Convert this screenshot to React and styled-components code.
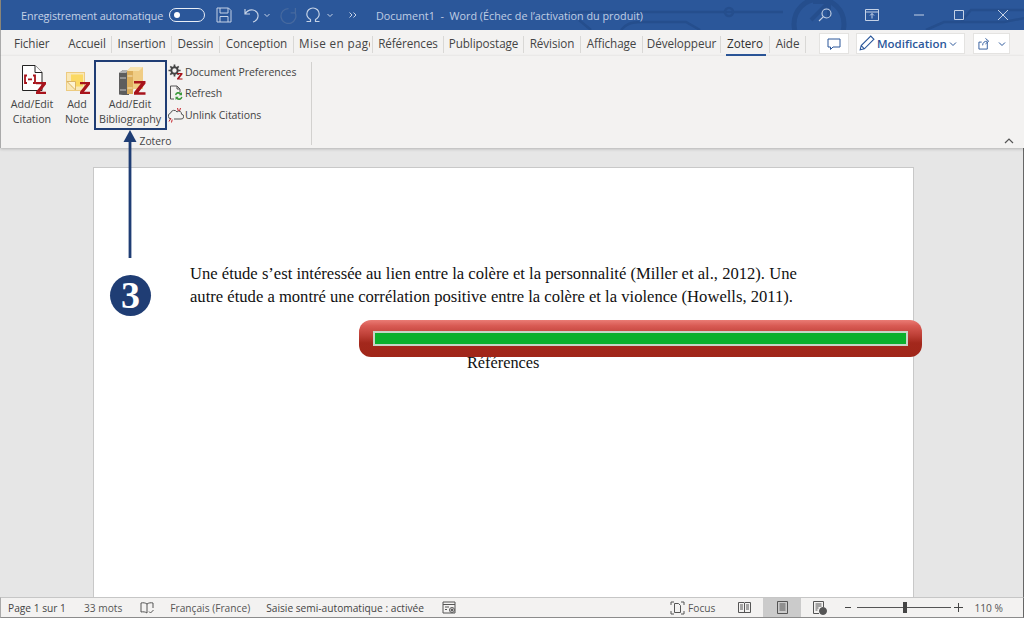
import React from "react";
import styled, { createGlobalStyle } from "styled-components";

const Global = createGlobalStyle`
  html, body { margin: 0; padding: 0; width: 1024px; height: 618px; overflow: hidden; }
  #root { width: 1024px; height: 618px; }
  * { box-sizing: border-box; }
`;

const UI = `"Open Sans", "Noto Sans", sans-serif`;

const Window = styled.div`
  position: relative;
  width: 1024px;
  height: 618px;
  display: flex;
  flex-direction: column;
  overflow: hidden;
  font-family: ${UI};
  background: #e6e6e6;
`;

/* Title bar */
const TitleBar = styled.header`
  position: relative;
  flex: 0 0 30px;
  height: 30px;
  background: #2b579a;
  display: flex;
  align-items: center;
  padding-left: 20px;
  color: #c5d2e6;
  font-size: 10.8px;
  border-left: 1px solid #8a8578;
`;
const Circuit = styled.svg`
  position: absolute;
  left: 0;
  top: 0;
  pointer-events: none;
`;
const AutoSave = styled.span`
  width: 148px;
  white-space: nowrap;
  letter-spacing: -0.12px;
  position: relative;
`;
const Toggle = styled.span`
  position: relative;
  width: 36px;
  height: 14px;
  border: 1.3px solid #e8edf5;
  border-radius: 8px;
  flex: none;
  &::after {
    content: "";
    position: absolute;
    left: 4px;
    top: 2.7px;
    width: 6px;
    height: 6px;
    border-radius: 50%;
    background: #fff;
  }
`;
const Qat = styled.div`
  position: relative;
  display: flex;
  align-items: center;
  margin-left: 11px;
  width: 160px;
  flex: none;
`;
const QatIcon = styled.svg`
  flex: none;
  margin-left: ${(p) => p.$ml || 0}px;
`;
const DocTitle = styled.span`
  position: relative;
  white-space: nowrap;
  font-size: 10.8px;
  color: #c0cee4;
`;
const WinButtons = styled.div`
  position: relative;
  margin-left: auto;
  display: flex;
  align-items: center;
  padding-right: 16px;
`;

/* Tabs */
const TabRow = styled.nav`
  flex: 0 0 26px;
  height: 26px;
  background: #f3f2f1;
  display: flex;
  align-items: stretch;
  padding-left: 7px;
  border-left: 1px solid #aaa;
  position: relative;
`;
const Tab = styled.span`
  flex: 0 0 ${(p) => p.$w}px;
  width: ${(p) => p.$w}px;
  margin-top: 6px;
  height: 17px;
  line-height: 15px;
  font-size: 11.7px;
  color: ${(p) => (p.$active ? "#2f2f2f" : "#444")};
  text-align: ${(p) => (p.$clip ? "left" : "center")};
  padding-left: ${(p) => (p.$clip ? 6 : 0)}px;
  white-space: nowrap;
  overflow: hidden;
  letter-spacing: -0.08px;
  border-right: ${(p) => (p.$sep ? "1px solid #d9d8d6" : "0")};
`;
const ClipText = styled.span`
  display: block;
  width: 71px;
  margin-left: -1px;
  overflow: hidden;
  letter-spacing: 0.38px;
`;
const ActiveLine = styled.span`
  position: absolute;
  left: 5px;
  top: 23.5px;
  width: 40px;
  height: 2.5px;
  background: #2b579a;
`;
const ActiveTabWrap = styled.span`
  position: relative;
  flex: 0 0 49px;
  display: flex;
`;
const TabActions = styled.div`
  margin-left: 13px;
  display: flex;
  align-items: flex-start;
  padding-top: 3px;
`;
const ActionButton = styled.div`
  width: ${(p) => p.$w}px;
  height: 21px;
  margin-right: ${(p) => p.$mr}px;
  padding-left: ${(p) => p.$pl || 0}px;
  background: #fff;
  border: 1px solid #e4e3e1;
  display: flex;
  align-items: center;
  justify-content: ${(p) => (p.$pl ? "flex-start" : "center")};
  gap: ${(p) => p.$gap || 0}px;
  color: #2b579a;
  font-size: 11.5px;
  font-weight: 600;
  white-space: nowrap;
`;

/* Ribbon */
const Ribbon = styled.section`
  flex: 0 0 92px;
  height: 92px;
  background: #f3f2f1;
  display: flex;
  padding: 6px 0 0 7px;
  position: relative;
  border-left: 1px solid #aaa;
  box-shadow: 0 1px 3px rgba(0, 0, 0, 0.22);
  z-index: 1;
`;
const Group = styled.div`
  width: 304px;
  height: 83px;
  border-right: 1px solid #d2d1cf;
  display: flex;
  flex-direction: column;
  padding-top: 3px;
`;
const GroupBody = styled.div`
  display: flex;
  flex: 0 0 64px;
  height: 64px;
`;
const GroupLabel = styled.div`
  flex: none;
  width: 295px;
  text-align: center;
  font-size: 10.3px;
  line-height: 14px;
  color: #444;
  margin-top: 5px;
`;
const BigButton = styled.div`
  flex: 0 0 ${(p) => p.$w}px;
  margin-left: ${(p) => p.$ml || 0}px;
  display: flex;
  flex-direction: column;
  align-items: center;
  color: #444;
  font-size: 10.7px;
  line-height: 15px;
  text-align: center;
  white-space: nowrap;
  letter-spacing: -0.05px;
`;
const SmallColumn = styled.div`
  margin: -4px 0 0 2px;
  display: flex;
  flex-direction: column;
`;
const SmallButton = styled.div`
  height: 21.5px;
  display: flex;
  align-items: center;
  gap: 1px;
  font-size: 10.5px;
  color: #444;
  white-space: nowrap;
  letter-spacing: -0.05px;
`;
const Collapse = styled.svg`
  position: absolute;
  right: 9px;
  bottom: 3px;
`;

/* Document area */
const Workspace = styled.main`
  flex: 1;
  min-height: 0;
  background: #e6e6e6;
  padding: 19px 0 0 93px;
  display: flex;
  border-right: 1px solid #666;
`;
const Page = styled.article`
  width: 821px;
  background: #fff;
  border: 1px solid #c8c8c8;
  border-bottom: 0;
  padding: 94px 0 0 96px;
  font-family: "Liberation Serif", serif;
  font-size: 16.6px;
  line-height: 23px;
  color: #111;
`;
const Para = styled.p`
  margin: 0;
  white-space: nowrap;
`;
const Heading = styled.p`
  margin: 43px 0 0 277px;
  white-space: nowrap;
  font-size: 16.3px;
`;

/* Status bar */
const StatusBar = styled.footer`
  flex: 0 0 21px;
  height: 21px;
  background: #f3f2f1;
  border-top: 1px solid #c6c6c6;
  border-bottom: 1px solid #8c8c8c;
  border-left: 1px solid #aaa;
  border-right: 1px solid #666;
  display: flex;
  align-items: center;
  padding-left: 7px;
  color: #444;
  font-size: 10.2px;
  white-space: nowrap;
  position: relative;
  z-index: 1;
`;
const StatusItem = styled.span`
  flex: 0 0 auto;
  margin-left: ${(p) => p.$ml || 0}px;
  display: flex;
  align-items: center;
  color: ${(p) => p.$c || "#444"};
`;
const ViewCell = styled.span`
  width: 38px;
  height: 19px;
  margin-left: ${(p) => p.$ml || 0}px;
  background: ${(p) => (p.$active ? "#cbcbcb" : "transparent")};
  display: flex;
  align-items: center;
  justify-content: center;
`;
const Slider = styled.span`
  position: relative;
  width: 94px;
  height: 1px;
  margin-left: 5px;
  background: #555;
  &::after {
    content: "";
    position: absolute;
    left: 46px;
    top: -5px;
    width: 4px;
    height: 11px;
    background: #444;
  }
`;

/* Annotations over the page */
const Highlight = styled.div`
  position: absolute;
  left: 94px;
  top: 60px;
  width: 73px;
  height: 70px;
  border: 2.5px solid #1f3d74;
  z-index: 3;
`;
const Arrow = styled.svg`
  position: absolute;
  left: 120px;
  top: 130px;
  z-index: 3;
`;
const Badge = styled.div`
  position: absolute;
  left: 110px;
  top: 275px;
  width: 41px;
  height: 41px;
  border-radius: 50%;
  background: #1f3d74;
  color: #fff;
  font-family: "Liberation Serif", serif;
  font-weight: 700;
  font-size: 38px;
  line-height: 41px;
  text-align: center;
  z-index: 3;
`;
const RedBar = styled.div`
  position: absolute;
  left: 359px;
  top: 320px;
  width: 563px;
  height: 37px;
  border-radius: 12px;
  background: linear-gradient(180deg, #ea7b74 0%, #d85a53 16%, #bd3f36 42%, #a3281c 62%, #a02619 100%);
  padding: 11px 14px;
  z-index: 3;
`;
const GreenBar = styled.div`
  height: 15px;
  background: #0bb02c;
  border: 2px solid #c6d6c6;
`;

const Z = ({ x, y, s = 1, c = "#a8141c" }) => (
  <path
    transform={`translate(${x} ${y}) scale(${s})`}
    d="M0 0h10v2.200L4 9.800h6V12H0V9.800l6-7.600H0z"
    fill={c}
  />
);

const CitationIcon = () => (
  <svg width="32" height="32" viewBox="0 0 32 32">
    <path d="M6.500.5H19l7 7v18H6.500z" fill="#fff" stroke="#222" strokeWidth="1" />
    <path d="M19 .5V7.500h7" fill="#fff" stroke="#222" strokeWidth="1" />
    <path d="M11 10.500H9V18h2M17 10.500h2V18h-2M12 14.300h4" fill="none" stroke="#a8141c" strokeWidth="1.800" />
    <Z x={20} y={17} s={1} />
  </svg>
);
const NoteIcon = () => (
  <svg width="32" height="32" viewBox="0 0 32 32">
    <rect x="5.500" y="7.500" width="18" height="18" fill="#f9e8b8" stroke="#edcb80" />
    <rect x="10" y="9.500" width="12" height="12" fill="#fbd963" />
    <path d="M6 16.500h8.500V25L6 16.500z" fill="#fdf3d2" stroke="#dcb565" />
    <Z x={19} y={17} s={1} />
  </svg>
);
const BiblioIcon = () => (
  <svg width="32" height="32" viewBox="0 0 32 32">
    <path d="M5 8l4-3h6v25H9l-4-.5z" fill="#5d5d5d" />
    <path d="M5 8l4-3h6l-3 3z" fill="#b0b0b0" />
    <path d="M6 13h6M6 25h6" stroke="#c9c9c9" strokeWidth="1" />
    <path d="M13 6l4-4h12v22H20l-7 4z" fill="#f0cd85" />
    <path d="M13 6l4-4h12l-4 4z" fill="#f7e2ae" />
    <rect x="13" y="6" width="6" height="23" fill="#dcae5c" />
    <path d="M13.500 11h5M13.500 23h5" stroke="#f7e6bf" strokeWidth="1" />
    <Z x={20} y={16} s={1.150} />
  </svg>
);
const GearIcon = () => (
  <svg width="16" height="16" viewBox="0 0 16 16">
    <circle cx="6.500" cy="6.500" r="3.200" fill="none" stroke="#444" strokeWidth="2" />
    <path d="M6.500.5v2.400M6.500 10.200v2.400M.5 6.500h2.400M10.200 6.500h2.400M2.300 2.300l1.700 1.700M9 9l1.700 1.700M2.300 10.700L4 9M9 4l1.700-1.700" stroke="#444" strokeWidth="1.700" />
    <Z x={9} y={9} s={0.55} />
  </svg>
);
const RefreshIcon = () => (
  <svg width="16" height="16" viewBox="0 0 16 16">
    <path d="M2.500 1H9l3 3v3M2.500 1v13H6" fill="none" stroke="#555" strokeWidth="1" />
    <path d="M9 1v3h3" fill="none" stroke="#555" strokeWidth="1" />
    <path d="M7 10a3.500 3.500 0 0 1 6-2l1-1v3.200h-3.200l1-1a2.200 2.200 0 0 0-3.500 1z" fill="#3c9a3c" />
    <path d="M14.500 12a3.500 3.500 0 0 1-6 2l-1 1v-3.200h3.200l-1 1a2.200 2.200 0 0 0 3.500-1z" fill="#3c9a3c" />
  </svg>
);
const UnlinkIcon = () => (
  <svg width="16" height="16" viewBox="0 0 16 16">
    <path d="M3 12a3 3 0 0 1-.4-5.900A3.500 3.500 0 0 1 9 5a2.600 2.600 0 0 1 4.500 2.200A2.400 2.400 0 0 1 13 12H6" fill="none" stroke="#555" strokeWidth="1" />
    <path d="M9.500 1l.8 3M12.500 1l-1 3M1 14.500l2-3.500M3.500 15.500l.7-3" stroke="#c8222a" strokeWidth="1" />
  </svg>
);

const tabs = [
  ["Accueil", 49],
  ["Insertion", 60],
  ["Dessin", 48],
  ["Conception", 74],
];
const tabs2 = [
  ["Références", 71],
  ["Publipostage", 80],
  ["Révision", 57],
  ["Affichage", 62],
  ["Développeur", 78],
];

export default function App() {
  return (
    <Window>
      <Global />
      <TitleBar>
        <Circuit width="1024" height="30" viewBox="0 0 1024 30" fill="none" stroke="#254e8d" strokeWidth="2.500">
          <circle cx="818" cy="24" r="25" strokeWidth="5" />
          <path d="M812 2h16v16M826 4l-16 16" strokeWidth="4" />
          <path d="M560 14l18 -2h150M728 12l14 0 M742 12h40M590 30l-12 -10M620 30c5-6 10-8 20-8h45l14 8" />
          <circle cx="728" cy="12" r="4" />
          <path d="M925 30l18-8h60l21-4M960 22l10-12h54" />
        </Circuit>
        <AutoSave>Enregistrement automatique</AutoSave>
        <Toggle />
        <Qat>
          <QatIcon width="16" height="16" viewBox="0 0 16 16" fill="none" stroke="#c5d2e6" strokeWidth="1">
            <path d="M1 1h11.500L15 3.500V15H1zM4 1v5h8V1M4 15V9.500h8V15" />
          </QatIcon>
          <QatIcon $ml={12} width="16" height="16" viewBox="0 0 16 16" fill="none" stroke="#c5d2e6" strokeWidth="1.200">
            <path d="M1 2v5h5M1.300 6.800C3 4 6 2.500 9 3c3 .6 5.500 3.200 5 6.500-.3 2.500-2.500 4.800-5 5.500" />
          </QatIcon>
          <QatIcon $ml={3} width="8" height="16" viewBox="0 0 8 16" fill="none" stroke="#c5d2e6" strokeWidth="1">
            <path d="M1.500 7l2.500 2.500L6.500 7" />
          </QatIcon>
          <QatIcon $ml={9} width="17" height="17" viewBox="0 0 16 16" fill="none" stroke="#46699f" strokeWidth="1.200">
            <path d="M8 1.500a7 7 0 1 0 6 3.500M14.500 1v4.500H10" />
          </QatIcon>
          <QatIcon $ml={8} width="16" height="16" viewBox="0 0 16 16" fill="none" stroke="#c5d2e6" strokeWidth="1.200">
            <path d="M1.500 14.500h4v-2C3 11 1.800 9 1.800 7a6.200 6 0 0 1 12.400 0c0 2-1.200 4-3.700 5.500v2h4" />
          </QatIcon>
          <QatIcon $ml={5} width="8" height="16" viewBox="0 0 8 16" fill="none" stroke="#c5d2e6" strokeWidth="1">
            <path d="M1.500 7l2.500 2.500L6.500 7" />
          </QatIcon>
          <QatIcon $ml={14} width="10" height="16" viewBox="0 0 10 16" fill="none" stroke="#c5d2e6" strokeWidth="1">
            <path d="M1.500 5.500l2.500 2.500-2.500 2.500M5.500 5.500l2.500 2.500-2.500 2.500" />
          </QatIcon>
        </Qat>
        <DocTitle>Document1&nbsp; - &nbsp;Word (Échec de l’activation du produit)</DocTitle>
        <WinButtons>
          <QatIcon width="14" height="14" viewBox="0 0 14 14" fill="none" stroke="#c5d2e6" strokeWidth="1.100">
            <circle cx="8.500" cy="5.500" r="4.500" />
            <path d="M5.200 8.800L1 13" />
          </QatIcon>
          <QatIcon $ml={33} width="14" height="12" viewBox="0 0 14 12" fill="none" stroke="#c5d2e6" strokeWidth="1">
            <path d="M.5.500h13v11H.5zM.5 3h13M7 9.500V4.500M5 6.500l2-2 2 2" />
          </QatIcon>
          <QatIcon $ml={35} width="10" height="10" viewBox="0 0 10 10" fill="none" stroke="#c5d2e6" strokeWidth="1">
            <path d="M0 5h10" />
          </QatIcon>
          <QatIcon $ml={30} width="10" height="10" viewBox="0 0 10 10" fill="none" stroke="#c5d2e6" strokeWidth="1">
            <path d="M.5.500h9v9h-9z" />
          </QatIcon>
          <QatIcon $ml={34} width="10" height="10" viewBox="0 0 10 10" fill="none" stroke="#c5d2e6" strokeWidth="1">
            <path d="M0 0l10 10M10 0L0 10" />
          </QatIcon>
        </WinButtons>
      </TitleBar>

      <TabRow>
        <Tab $w={55} $clip>Fichier</Tab>
        {tabs.map(([t, w]) => (
          <Tab key={t} $w={w} $sep>{t}</Tab>
        ))}
        <Tab $w={79} $sep $clip><ClipText>Mise en page</ClipText></Tab>
        {tabs2.map(([t, w]) => (
          <Tab key={t} $w={w} $sep>{t}</Tab>
        ))}
        <ActiveTabWrap>
          <Tab $w={49} $sep $active>Zotero</Tab>
          <ActiveLine />
        </ActiveTabWrap>
        <Tab $w={36} $sep>Aide</Tab>
        <TabActions>
          <ActionButton $w={30} $mr={7}>
            <svg width="14" height="14" viewBox="0 0 14 14" fill="none" stroke="#2b579a" strokeWidth="1">
              <path d="M1 2h12v8H6l-2.500 2.500V10H1z" />
            </svg>
          </ActionButton>
          <ActionButton $w={109} $mr={8} $gap={2} $pl={1}>
            <svg width="17" height="17" viewBox="0 0 16 16" fill="none" stroke="#2b579a" strokeWidth="1">
              <path d="M2 14l1-4L12 1l3 3-9 9z M3 10l3 3" />
            </svg>
            Modification
            <svg width="8" height="8" viewBox="0 0 8 8" fill="none" stroke="#2b579a" strokeWidth="1">
              <path d="M1 2.500l3 3 3-3" />
            </svg>
          </ActionButton>
          <ActionButton $w={37} $mr={0} $gap={7}>
            <svg width="13" height="13" viewBox="0 0 14 14" fill="none" stroke="#2b579a" strokeWidth="1">
              <path d="M10 5.500V13H1V5.500h3M5 9c0-3 2-4.500 5-4.500M8 1.500l3.500 3L8 7.500" />
            </svg>
            <svg width="8" height="8" viewBox="0 0 8 8" fill="none" stroke="#2b579a" strokeWidth="1">
              <path d="M1 2.500l3 3 3-3" />
            </svg>
          </ActionButton>
        </TabActions>
      </TabRow>

      <Ribbon>
        <Group>
          <GroupBody>
            <BigButton $w={48}>
              <CitationIcon />
              <span>Add/Edit</span>
              <span>Citation</span>
            </BigButton>
            <BigButton $w={34} $ml={4}>
              <NoteIcon />
              <span>Add</span>
              <span>Note</span>
            </BigButton>
            <BigButton $w={72}>
              <BiblioIcon />
              <span>Add/Edit</span>
              <span>Bibliography</span>
            </BigButton>
            <SmallColumn>
              <SmallButton><GearIcon />Document Preferences</SmallButton>
              <SmallButton><RefreshIcon />Refresh</SmallButton>
              <SmallButton><UnlinkIcon />Unlink Citations</SmallButton>
            </SmallColumn>
          </GroupBody>
          <GroupLabel>Zotero</GroupLabel>
        </Group>
        <Collapse width="12" height="8" viewBox="0 0 12 8" fill="none" stroke="#555" strokeWidth="1.200">
          <path d="M2 6l4-4 4 4" />
        </Collapse>
      </Ribbon>

      <Workspace>
        <Page>
          <Para>Une étude s’est intéressée au lien entre la colère et la personnalité (Miller et al., 2012). Une</Para>
          <Para>autre étude a montré une corrélation positive entre la colère et la violence (Howells, 2011).</Para>
          <Heading>Références</Heading>
        </Page>
      </Workspace>

      <StatusBar>
        <StatusItem>Page 1 sur 1</StatusItem>
        <StatusItem $ml={18} $c="#555">33 mots</StatusItem>
        <StatusItem $ml={18}>
          <svg width="15" height="14" viewBox="0 0 15 14" fill="none" stroke="#555" strokeWidth="1">
            <path d="M7 3C5.500 1.800 3 1.500 1 2v9c2-.4 4.500-.2 6 1M7 3c1.500-1.200 4-1.500 6-1v5M7 3v9M9 10.500l1.500 1.500 3-3" />
          </svg>
        </StatusItem>
        <StatusItem $ml={15} $c="#555">Français (France)</StatusItem>
        <StatusItem $ml={16}>Saisie semi-automatique : activée</StatusItem>
        <StatusItem $ml={18}>
          <svg width="15" height="14" viewBox="0 0 15 14" fill="none" stroke="#555" strokeWidth="1">
            <path d="M1 1h12v11H1zM1 3.500h12M3 6h4M3 8.500h2" />
            <circle cx="10" cy="9" r="2.500" fill="#f3f2f1" />
            <circle cx="10" cy="9" r="1" fill="#555" />
          </svg>
        </StatusItem>
        <StatusItem $ml={213}>
          <svg width="15" height="14" viewBox="0 0 15 14" fill="none" stroke="#555" strokeWidth="1">
            <path d="M1 4V1h3M11 1h3v3M14 10v3h-3M4 13H1v-3M4.500 2.500h4l2 2v7h-6z" />
          </svg>
        </StatusItem>
        <StatusItem $ml={3} $c="#555">Focus</StatusItem>
        <StatusItem $ml={23}>
          <svg width="13" height="13" viewBox="0 0 13 13" fill="none" stroke="#555" strokeWidth="1">
            <path d="M.5 1.500h5.500l.5.500.5-.5h5.500v10H7l-.5.500-.5-.5H.5zM6.500 2v10M2 4h3M2 6h3M2 8h3M8 4h3M8 6h3M8 8h3" />
          </svg>
        </StatusItem>
        <ViewCell $active $ml={12}>
          <svg width="11" height="13" viewBox="0 0 11 13" fill="none" stroke="#555" strokeWidth="1">
            <path d="M.5.500h10v12H.5zM2.500 3h6M2.500 5h6M2.500 7h6M2.500 9h6" />
          </svg>
        </ViewCell>
        <StatusItem $ml={12}>
          <svg width="14" height="14" viewBox="0 0 14 14" fill="none" stroke="#555" strokeWidth="1">
            <path d="M6 12.500H.5V.500h10V6M2.500 3h6M2.500 5h6M2.500 7h3M2.500 9h2" />
            <circle cx="10" cy="10" r="3.500" fill="#555" />
          </svg>
        </StatusItem>
        <StatusItem $ml={18}>
          <svg width="7" height="7" viewBox="0 0 7 7" stroke="#444"><path d="M0 3.500h6" /></svg>
        </StatusItem>
        <Slider />
        <StatusItem $ml={3}>
          <svg width="9" height="9" viewBox="0 0 9 9" stroke="#444"><path d="M0 4.500h9M4.500 0v9" /></svg>
        </StatusItem>
        <StatusItem $ml={11} $c="#555">110 %</StatusItem>
      </StatusBar>

      <Highlight />
      <Arrow width="20" height="130" viewBox="0 0 20 130">
        <path d="M10 10v118" stroke="#1f3d74" strokeWidth="2.800" />
        <path d="M10 0l6.500 12h-13z" fill="#1f3d74" />
      </Arrow>
      <Badge>3</Badge>
      <RedBar>
        <GreenBar />
      </RedBar>
    </Window>
  );
}
